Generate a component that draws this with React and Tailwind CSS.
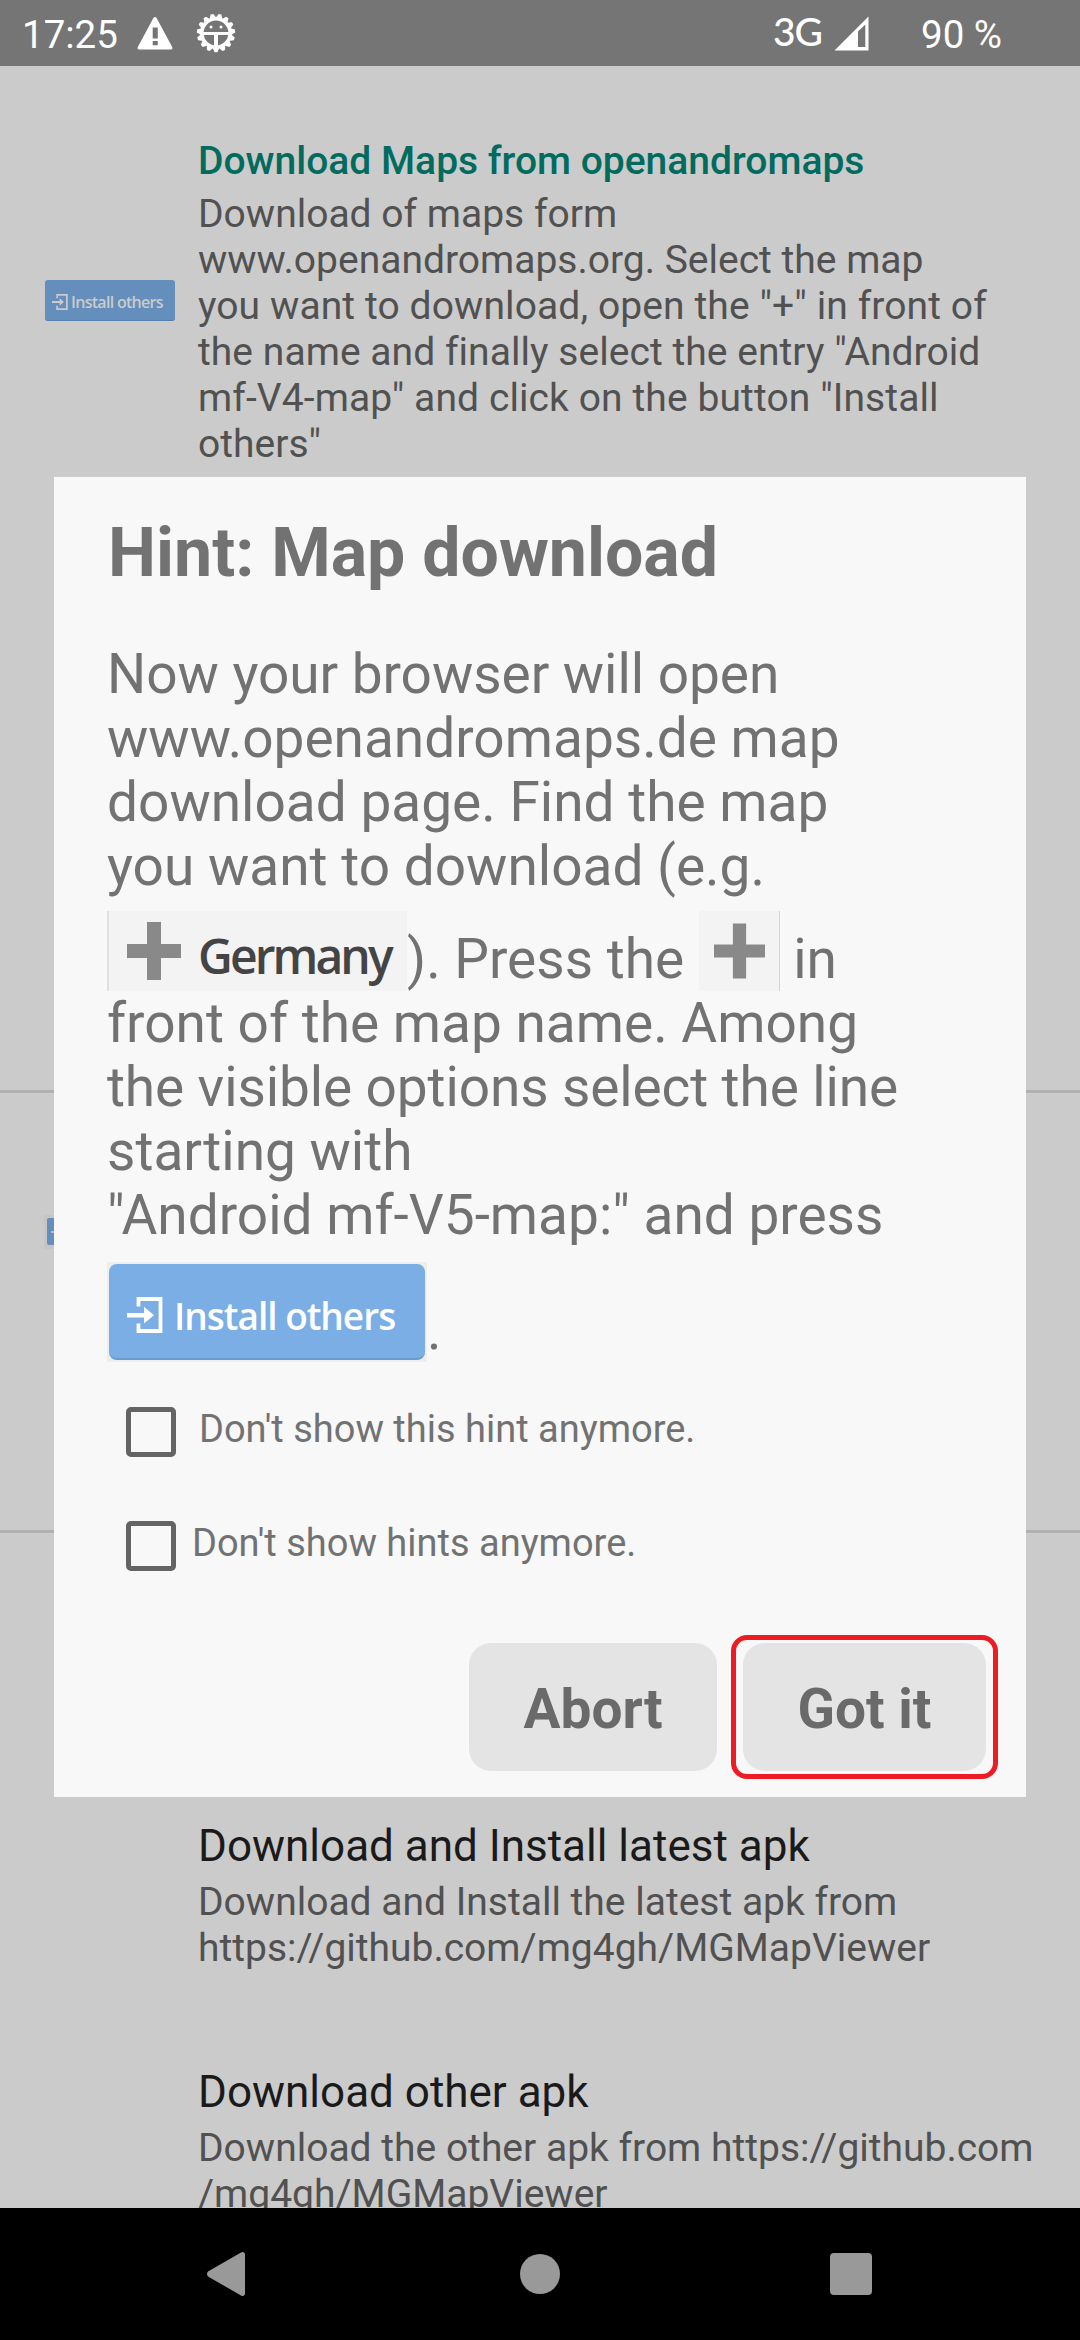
function WarningIcon() {
  return (
    <svg width="36" height="34" viewBox="0 0 36 34" className="shrink-0">
      <path
        fill="#fff"
        fillRule="evenodd"
        d="M18 1 Q19 1 19.6 2 L35.2 31 Q36 33.4 34 33.4 H2 Q0 33.4 0.8 31 L16.4 2 Q17 1 18 1Z M15.7 11.5 V22.5 H20.8 V11.5Z M15.7 24.9 V29.3 H20.8 V24.9Z"
      />
    </svg>
  );
}

const TEETH = Array.from({ length: 15 }, (_, i) => i * 24 + 180);

function GearFaceIcon() {
  return (
    <svg width="40" height="40" viewBox="-20 -20 40 40" className="shrink-0">
      {TEETH.map((a) => (
        <path key={a} d="M-3.6 -14.5 L-1.4 -19.2 H1.4 L3.6 -14.5Z" fill="#fff" transform={`rotate(${a})`} />
      ))}
      <circle r="14" fill="none" stroke="#fff" strokeWidth="3.2" />
      <path d="M-13 0.5 H13" stroke="#fff" strokeWidth="3" />
      <path d="M0 0.5 V14" stroke="#fff" strokeWidth="4" />
      <circle cx="-5" cy="-6" r="1.5" fill="#fff" />
      <circle cx="5" cy="-6" r="1.5" fill="#fff" />
    </svg>
  );
}

function SignalIcon() {
  return (
    <svg width="35" height="35" viewBox="0 0 35 35" className="shrink-0">
      <path fill="#fff" fillRule="evenodd" d="M34.5 0.5 V34.5 H0.5Z M31.3 8.5 L24 15.5 V31 H31.3Z" />
    </svg>
  );
}

function LoginIcon({ className }) {
  return (
    <svg viewBox="0 0 36 36" className={className}>
      <path d="M11.5 9.5 V2 H33.5 V34 H11.5 V26.5" fill="none" stroke="currentColor" strokeWidth="3.8" />
      <path d="M0 16 H17 V9.8 L27 18.2 L17 26.5 V20.4 H0Z" fill="currentColor" />
    </svg>
  );
}

function PlusIcon({ className }) {
  return (
    <svg viewBox="0 0 54 58" className={className}>
      <path d="M20 0 H34 V22 H54 V36 H34 V58 H20 V36 H0 V22 H20Z" fill="#898989" />
    </svg>
  );
}

function SmallInstall() {
  return (
    <div className="flex h-[41px] w-[130px] items-center rounded-[3px] border-b border-[#5580ad] bg-[#648ebb] pl-[7px] pt-1 text-[#cbcbcb]">
      <LoginIcon className="h-[16px] w-[16px]" />
      <span className="ml-[3px] whitespace-nowrap font-['Open_Sans'] text-[16px] font-semibold leading-none tracking-[-0.7px]">
        Install others
      </span>
    </div>
  );
}

function Line({ children, tracking = "" }) {
  return <div className={`h-[46px] whitespace-nowrap leading-[46px] ${tracking}`}>{children}</div>;
}

function CheckRow({ label, gap }) {
  return (
    <div className="flex h-[114px] pl-[19px]">
      <div className="mt-[32px] h-[50px] w-[50px] shrink-0 rounded-[5px] border-[5.5px] border-[#646464]" />
      <span className={`mt-[31px] whitespace-nowrap text-[38px] leading-[46px] ${gap}`}>{label}</span>
    </div>
  );
}

function Dialog() {
  return (
    <div className="absolute left-[54px] top-[477px] flex h-[1320px] w-[972px] flex-col bg-[#f8f8f8] pl-[53px] text-[#727272]">
      <h2 className="ml-px mt-[36px] h-[80px] whitespace-nowrap text-[68px] font-bold leading-[80px]">Hint: Map download</h2>
      <div className="mt-[49px] whitespace-nowrap text-[55px] leading-[64px]">
        <p className="tracking-[-0.05px]">Now your browser will open</p>
        <p>www.openandromaps.de map</p>
        <p>download page. Find the map</p>
        <p>you want to download (e.g.</p>
        <div className="flex h-[93px] items-end">
          <div className="flex h-[80px] w-[300px] shrink-0 border-l-2 border-[#e0e0e0] bg-[#f3f3f3]">
            <PlusIcon className="ml-[18px] mt-[11px] h-[58px] w-[54px] shrink-0" />
            <span className="ml-[17px] mt-[15px] font-['Open_Sans'] text-[48px] font-semibold leading-[60px] tracking-[-2.9px] text-[#444]">
              Germany
            </span>
          </div>
          <span>). Press the</span>
          <div className="ml-[15px] h-[80px] w-[81px] shrink-0 border-r border-[#d4d4d4] bg-[#f3f3f3]">
            <PlusIcon className="ml-[15px] mt-[11px] h-[58px] w-[51px]" />
          </div>
          <span className="ml-[13px]">in</span>
        </div>
        <p>front of the map name. Among</p>
        <p className="tracking-[-0.12px]">the visible options select the line</p>
        <p>starting with</p>
        <p>"Android mf-V5-map:" and press</p>
        <div className="mt-[15px] flex h-[100px] items-end">
          <div className="h-[100px] w-[320px] shrink-0 bg-[#eeeeee] p-[2px]">
            <div className="flex h-[96px] w-[316px] items-center rounded-[8px] border-b-2 border-[#6899cf] bg-[#7baee5] pl-[18px] pt-[8px] text-white">
              <LoginIcon className="h-[36px] w-[36px]" />
              <span className="ml-[11px] font-['Open_Sans'] text-[37px] font-semibold leading-none tracking-[-1px]">Install others</span>
            </div>
          </div>
          <span>.</span>
        </div>
      </div>
      <div className="mt-[13px]">
        <CheckRow label="Don't show this hint anymore." gap="ml-[23px]" />
        <CheckRow label="Don't show hints anymore." gap="ml-[16px]" />
      </div>
      <div className="mt-[32px] flex items-center justify-end pr-[28px] text-[55px] font-bold text-[#6a6a6a]">
        <button className="mr-[14px] h-[128px] w-[248px] rounded-[22px] bg-[#e4e4e4] pt-[5px]">Abort</button>
        <div className="flex h-[144px] w-[267px] items-center justify-center rounded-[16px] border-[5px] border-[#ed1c24]">
          <button className="h-[128px] w-[243px] shrink-0 rounded-[22px] bg-[#e4e4e4] pt-[5px]">Got it</button>
        </div>
      </div>
    </div>
  );
}

export default function App() {
  return (
    <div className="relative flex h-[2340px] w-[1080px] flex-col overflow-hidden bg-[#cbcbcb] font-['Roboto',sans-serif]">
      <header className="flex h-[66px] shrink-0 items-center bg-[#757575] text-[38.5px] leading-none text-white">
        <span className="ml-[22px] w-[98px] pt-[5px]">17:25</span>
        <div className="ml-[17px]"><WarningIcon /></div>
        <div className="ml-[23px]"><GearFaceIcon /></div>
        <span className="ml-[537px] w-[50px] whitespace-nowrap pb-[3px] font-['Lato'] text-[39px] font-medium tracking-[-1px]">3G</span>
        <div className="ml-[11px]"><SignalIcon /></div>
        <span className="ml-[52px] whitespace-nowrap pt-[5px]">90 %</span>
      </header>
      <main className="h-[2142px] shrink-0 overflow-hidden text-[39px] text-[#515151]">
        <section className="flex h-[1024px]">
          <div className="w-[198px] shrink-0 pl-[45px] pt-[214px]"><SmallInstall /></div>
          <div className="pt-[72px]">
            <div className="mb-[7px] h-[46px] whitespace-nowrap font-medium leading-[46px] text-[#006b5e]">
              Download Maps from openandromaps
            </div>
            <Line>Download of maps form</Line>
            <Line>www.openandromaps.org. Select the map</Line>
            <Line tracking="tracking-[0.1px]">you want to download, open the "+" in front of</Line>
            <Line tracking="tracking-[0.05px]">the name and finally select the entry "Android</Line>
            <Line tracking="tracking-[0.1px]">mf-V4-map" and click on the button "Install</Line>
            <Line>others"</Line>
          </div>
        </section>
        <section className="h-[440px] border-t-[3px] border-[#b1b1b1] pl-[44px] pt-[122px]">
          <div className="h-[34px] w-[130px] bg-[#c5c5c5] p-[3px]">
            <div className="flex h-[27px] items-center rounded-[2px] bg-[#648ebb] pl-1 text-[#cbcbcb]">
              <LoginIcon className="h-3 w-3" />
            </div>
          </div>
        </section>
        <section className="border-t-[3px] border-[#b1b1b1] pl-[198px] pt-[287px]">
          <div className="h-[52px] whitespace-nowrap text-[44px] leading-[52px] text-[#1a1a1a]">Download and Install latest apk</div>
          <div className="mb-[95px] mt-[7px]">
            <Line>Download and Install the latest apk from</Line>
            <Line>https://github.com/mg4gh/MGMapViewer</Line>
          </div>
          <div className="h-[52px] whitespace-nowrap text-[44px] leading-[52px] text-[#1a1a1a]">Download other apk</div>
          <div className="mt-[7px]">
            <Line>Download the other apk from https://github.com</Line>
            <Line>/mg4gh/MGMapViewer</Line>
          </div>
        </section>
      </main>
      <nav className="flex h-[132px] shrink-0 items-center bg-black">
        <svg width="40" height="46" viewBox="0 0 40 46" className="ml-[206px]">
          <path d="M39 3 V43 Q38 46 35 44.5 L2 25.5 Q0 23 2 20.5 L35 1.5 Q38 0 39 3Z" fill="#999" />
        </svg>
        <div className="ml-[274px] h-[40px] w-[40px] rounded-full bg-[#999]" />
        <div className="ml-[270px] h-[42px] w-[42px] rounded-[4px] bg-[#999]" />
      </nav>
      <Dialog />
    </div>
  );
}
